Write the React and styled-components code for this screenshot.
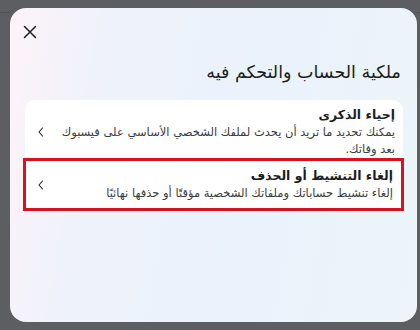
import React from "react";
import styled, { createGlobalStyle } from "styled-components";

const Global = createGlobalStyle`
  html, body { margin: 0; padding: 0; }
  body {
    background: #5e6063;
    font-family: "DejaVu Sans", "Noto Sans", sans-serif;
  }
`;

const Backdrop = styled.div`
  width: 420px;
  height: 330px;
  box-sizing: border-box;
  padding: 8px 3px 8px 10px;
  background: #5c5e61;
  position: relative;
  overflow: hidden;
`;

const BgLine = styled.div`
  position: absolute;
  background: #4f5154;
  ${(p) => p.$css}
`;

const Modal = styled.div`
  position: relative;
  width: 100%;
  height: 100%;
  border-radius: 16px;
  background: linear-gradient(100deg, #fdf3f8 0%, #eff2fb 22%, #eaf2fc 60%, #ecf5f8 100%);
  box-sizing: border-box;
  padding: 8px 0 0 0;
  display: flex;
  flex-direction: column;
`;

const Header = styled.div`
  display: flex;
  padding-left: 4px;
`;

const CloseButton = styled.button`
  width: 32px;
  height: 32px;
  padding: 0;
  border: none;
  background: transparent;
  display: flex;
  align-items: center;
  justify-content: center;
  cursor: pointer;
`;

const Title = styled.h1`
  margin: 11px 0 0 0;
  padding-right: 16px;
  font-size: 17.5px;
  font-weight: 400;
  color: #1c1e21;
  text-align: right;
  direction: rtl;
  line-height: 26px;
`;

const Card = styled.div`
  margin: 15px 14px 0 15px;
  background: #ffffff;
  border-radius: 10px;
  direction: rtl;
  display: flex;
  flex-direction: column;
`;

const Row = styled.div`
  display: flex;
  align-items: center;
  gap: 12px;
  padding: ${(p) => (p.$highlight ? "6px 8px 6px 10px" : "6px 8px 0 11px")};
  margin: ${(p) => (p.$highlight ? "0 -1px 0 -2px" : "0")};
  border: ${(p) => (p.$highlight ? "3px solid #d6121d" : "none")};
`;

const Texts = styled.div`
  flex: 1;
  display: flex;
  flex-direction: column;
`;

const RowTitle = styled.div`
  font-size: 12.5px;
  font-weight: 700;
  color: #1c1e21;
  line-height: 18px;
`;

const RowDesc = styled.div`
  font-size: 11.5px;
  color: #3a3b3d;
  line-height: 17px;
`;

const Chevron = styled.svg`
  flex: none;
  width: 10px;
  height: 10px;
`;

function ChevronIcon() {
  return (
    <Chevron viewBox="0 0 10 10">
      <path d="M6.5 1 L3 5 L6.5 9" fill="none" stroke="#1c1e21" strokeWidth="1.1" strokeLinecap="round" strokeLinejoin="round" />
    </Chevron>
  );
}

export default function App() {
  return (
    <>
      <Global />
      <Backdrop>
        <BgLine $css="left:0;top:12px;width:10px;height:1px;" />
        <BgLine $css="right:0;top:12px;width:3px;height:1px;" />
        <Modal>
          <Header>
            <CloseButton aria-label="إغلاق">
              <svg width="14" height="14" viewBox="0 0 14 14">
                <path d="M1.5 1.5 L12.5 12.5 M12.5 1.5 L1.5 12.5" stroke="#1c1e21" strokeWidth="1.5" strokeLinecap="round" />
              </svg>
            </CloseButton>
          </Header>
          <Title>ملكية الحساب والتحكم فيه</Title>
          <Card>
            <Row>
              <Texts>
                <RowTitle>إحياء الذكرى</RowTitle>
                <RowDesc>يمكنك تحديد ما تريد أن يحدث لملفك الشخصي الأساسي على فيسبوك بعد وفاتك.</RowDesc>
              </Texts>
              <ChevronIcon />
            </Row>
            <Row $highlight>
              <Texts>
                <RowTitle>إلغاء التنشيط أو الحذف</RowTitle>
                <RowDesc>إلغاء تنشيط حساباتك وملفاتك الشخصية مؤقتًا أو حذفها نهائيًا</RowDesc>
              </Texts>
              <ChevronIcon />
            </Row>
          </Card>
        </Modal>
      </Backdrop>
    </>
  );
}
